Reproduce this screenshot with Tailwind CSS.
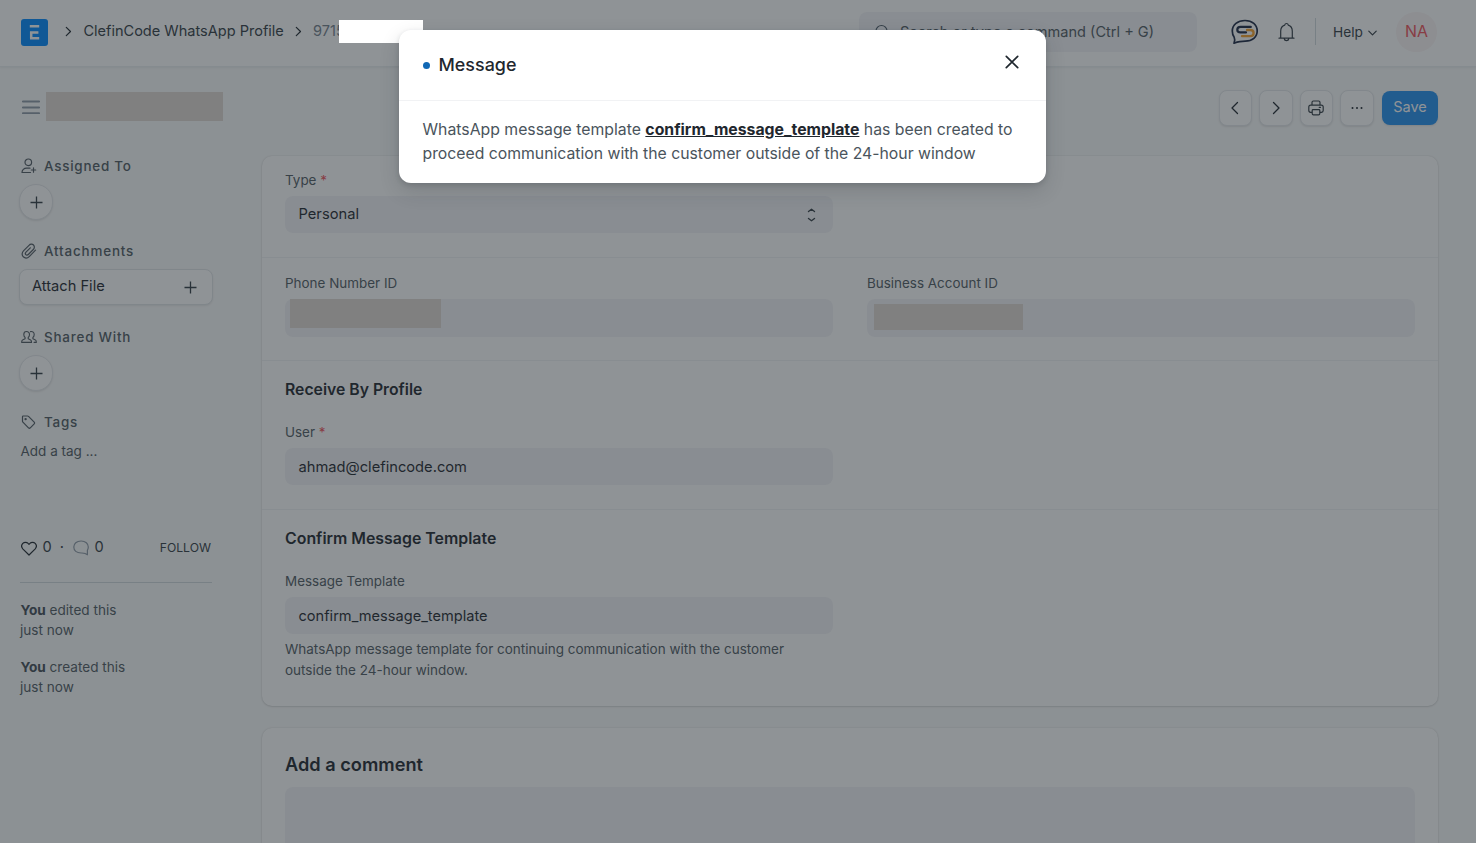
<!DOCTYPE html>
<html lang="en">
<head>
<meta charset="utf-8">
<title>ClefinCode WhatsApp Profile</title>
<script src="https://cdn.jsdelivr.net/npm/@tailwindcss/browser@4"></script>
</head>
<body class="relative h-[843px] w-[1476px] overflow-hidden bg-[#f9fafa] font-['Inter',sans-serif] text-[14.6px] text-[#1f272e]">

<!-- Navbar -->
<header class="flex h-[67px] items-start border-b border-[#ebeef0] bg-white pl-[21px] shadow-[0_1px_2px_rgba(0,0,0,0.06)]">
  <svg class="mt-[19px] h-[27px] w-[27px] shrink-0" viewBox="0 0 27 27"><rect width="27" height="27" rx="3" fill="#0089ff"/><path d="M8.800 7.300h9.400M9 13.500h8.400M10.200 12.300v7.300M9 19.200h9.200" stroke="#fff" stroke-width="2.500" fill="none"/></svg>
  <svg class="ml-[16px] mt-[26px] h-[11px] w-[8px] shrink-0" viewBox="0 0 8 11" fill="none" stroke="#1f272e" stroke-width="1.200" stroke-linecap="round" stroke-linejoin="round"><path d="M2.300 1.300l4.200 4.200-4.200 4.200"/></svg>
  <div class="ml-[11px] mt-[20px] w-[202px] whitespace-nowrap pl-[0.4px] text-[14.55px] leading-[22px] text-[#333c44]">ClefinCode WhatsApp Profile</div>
  <svg class="ml-[10px] mt-[26px] h-[11px] w-[8px] shrink-0" viewBox="0 0 8 11" fill="none" stroke="#1f272e" stroke-width="1.200" stroke-linecap="round" stroke-linejoin="round"><path d="M1.300 1.300l4.200 4.200-4.200 4.200"/></svg>
  <div class="ml-[10px] mt-[20px] w-[109px] text-[14.55px] leading-[22px] text-[#74808b]">9715</div>
  <div class="ml-auto mt-[12px] flex h-[40px] w-[338px] shrink-0 items-center rounded-lg bg-[#f3f3f6] pl-[15px]">
    <svg class="h-[16px] w-[16px]" viewBox="0 0 16 16" fill="none" stroke="#4c5a67" stroke-width="1.200" stroke-linecap="round"><circle cx="7.500" cy="7" r="5.500"/><path d="M11.500 11l3 3"/></svg>
    <span class="ml-[10px] whitespace-nowrap text-[14.57px] leading-[22px] text-[#505a62]">Search or type a command (Ctrl + G)</span>
  </div>
  <svg class="ml-[34px] mt-[19px] h-[26px] w-[28px] shrink-0" viewBox="0 0 28 26" fill="none" stroke-linecap="round" stroke-linejoin="round">
    <path d="M3.200 18.300C1.900 16.500 1.300 14.400 1.300 12 1.300 5.600 6.700 1.500 14 1.500c7.200 0 12.200 4.300 12.200 10.500 0 6-4.900 10.200-11.900 10.200-2 0-3.600.2-5.500.5-2 .3-3.800.8-5.800 1.500.8-2 1.100-4.100.2-5.900z" stroke="#1b2743" stroke-width="1.700"/>
    <path d="M16 11h3.300c2.200 0 3.300 1.300 3.300 3s-1.200 3.200-3.300 3.200H11" stroke="#f6a12b" stroke-width="2.300"/>
    <path d="M19.800 7.900H9.500C7.600 7.900 6.300 9 6.300 10.700s1.200 2.700 3.100 2.700H15" stroke="#1b2743" stroke-width="2.200"/>
  </svg>
  <svg class="ml-[19px] mt-[22px] h-[20px] w-[17px] shrink-0" viewBox="0 0 17 20" fill="none" stroke="#323b44" stroke-width="1.200" stroke-linecap="round" stroke-linejoin="round"><path d="M1 16.200h15M2.700 16V9.200C2.700 6 4.300 3.900 6.700 3.200c.2-1 .9-1.700 1.800-1.700s1.600.7 1.800 1.700c2.400.7 4 2.800 4 6V16M6.200 16.600c.2 1.300 1.100 2 2.300 2s2.100-.7 2.300-2"/></svg>
  <div class="ml-[20px] mt-[18px] h-[27px] w-px bg-[#d1d8dd]"></div>
  <div class="ml-[17px] mt-[21px] w-[35px] text-[13.7px] leading-[22px] text-[#333c44]">Help</div>
  <svg class="mt-[30px] h-[7px] w-[9px] shrink-0" viewBox="0 0 9 7" fill="none" stroke="#333c44" stroke-width="1.200" stroke-linecap="round" stroke-linejoin="round"><path d="M.8 1.200l3.700 3.700 3.700-3.700"/></svg>
  <div class="ml-[19px] mr-[39px] mt-[12px] flex h-[40px] w-[41px] shrink-0 items-center justify-center rounded-full bg-[#fbf4f4] text-[15.9px] text-[#f0525b]">NA</div>
</header>

<!-- Page heading -->
<div class="flex h-[88px] items-start pl-[22px]">
  <svg class="mt-[33px] h-[15px] w-[18px]" viewBox="0 0 18 15" stroke="#8d99a6" stroke-width="1.800" stroke-linecap="round"><path d="M.8 1.500h16.400M.8 7.500h16.400M.8 13.200h16.400"/></svg>
  <div class="ml-[6px] mt-[25px] h-[29px] w-[177px] bg-[#e1d9d2]"></div>
  <div class="ml-auto mr-[38px] mt-[24px] flex">
    <div class="mt-[-1px] flex h-[36px] w-[33px] items-center justify-center rounded-lg border border-[#e4e7ea] bg-white shadow-[0_1px_2px_rgba(0,0,0,0.1)]"><svg class="mr-px h-[14px] w-[10px]" viewBox="0 0 10 14" fill="none" stroke="#1f272e" stroke-width="1.300" stroke-linecap="round" stroke-linejoin="round"><path d="M7.500 1.500L2 7l5.500 5.500"/></svg></div>
    <div class="ml-[7px] mt-[-1px] flex h-[36px] w-[34px] items-center justify-center rounded-lg border border-[#e4e7ea] bg-white shadow-[0_1px_2px_rgba(0,0,0,0.1)]"><svg class="h-[14px] w-[10px]" viewBox="0 0 10 14" fill="none" stroke="#1f272e" stroke-width="1.300" stroke-linecap="round" stroke-linejoin="round"><path d="M2.500 1.500L8 7l-5.500 5.500"/></svg></div>
    <div class="ml-[7px] mt-[-1px] flex h-[36px] w-[33px] items-center justify-center rounded-lg border border-[#e4e7ea] bg-white shadow-[0_1px_2px_rgba(0,0,0,0.1)]"><svg class="mr-px h-[16px] w-[16px]" viewBox="0 0 16 16" fill="none" stroke="#333c44" stroke-width="1.200" stroke-linecap="round" stroke-linejoin="round"><path d="M4 5V2.500c0-.9.600-1.500 1.400-1.500h5.200c.8 0 1.400.6 1.400 1.500V5M3.800 12.300H2.500c-1 0-1.700-.7-1.700-1.700V7c0-1.100.8-1.900 1.900-1.900h10.600c1.100 0 1.900.8 1.900 1.900v3.600c0 1-.7 1.700-1.700 1.700h-1.300M5 9.700h6c.5 0 .8.300.8.8v3c0 .8-.5 1.300-1.200 1.300H5.400c-.7 0-1.200-.5-1.200-1.300v-3c0-.5.300-.8.800-.8zM11.200 7.300h1.300"/></svg></div>
    <div class="ml-[7px] mt-[-1px] flex h-[36px] w-[34px] items-center justify-center rounded-lg border border-[#e4e7ea] bg-white shadow-[0_1px_2px_rgba(0,0,0,0.1)]"><svg class="h-[4px] w-[12px]" viewBox="0 0 12 4" fill="#1f272e"><circle cx="1.500" cy="2" r="1"/><circle cx="6" cy="2" r="1"/><circle cx="10.500" cy="2" r="1"/></svg></div>
    <div class="ml-[8px] h-[34px] w-[56px] rounded-lg bg-[#2490ef] text-center text-[14.5px] leading-[32px] text-white shadow-[0_1px_2px_rgba(0,0,0,0.1)]">Save</div>
  </div>
</div>

<main class="flex h-[688px] overflow-hidden">
  <!-- Sidebar -->
  <aside class="w-[262px] shrink-0 pl-[20px] pr-[50px] text-[13.6px] text-[#505a62]">
    <div class="flex h-[22px] items-center text-[13.45px] font-medium tracking-[0.75px]">
      <svg class="ml-[1px] h-[16px] w-[16px]" viewBox="0 0 16 16" fill="none" stroke="#505a62" stroke-width="1.200" stroke-linecap="round" stroke-linejoin="round"><circle cx="7.300" cy="4.300" r="3.300"/><path d="M9 10.200H5.600C3 10.200 1 12 1 14.500h8.500M12.500 9.800v4.400M10.300 12h4.400"/></svg>
      <span class="ml-[7px]">Assigned To</span>
    </div>
    <div class="-ml-px mt-[7px] flex h-[36px] w-[34px] items-center justify-center rounded-full border border-[#e4e7ea] bg-white shadow-[0_1px_2px_rgba(0,0,0,0.1)]"><svg class="h-[13px] w-[13px]" viewBox="0 0 13 13" stroke="#333c44" stroke-width="1.300"><path d="M6.500.5v12M.5 6.500h12"/></svg></div>
    <div class="mt-[20px] flex h-[22px] items-center text-[13.45px] font-medium tracking-[0.82px]">
      <svg class="ml-[1px] h-[16px] w-[16px]" viewBox="0 0 16 16" fill="none" stroke="#505a62" stroke-width="1.200" stroke-linecap="round" stroke-linejoin="round"><path d="M14.500 7.200l-6 6.100c-1.900 1.900-4.500 2.100-6.200.5-1.700-1.700-1.500-4.300.4-6.200l5.300-5.300c1.300-1.300 3.300-1.500 4.500-.3 1.200 1.200 1.100 3.200-.2 4.500l-5 5c-.8.8-1.800.9-2.500.2-.7-.7-.6-1.700.2-2.500l4.300-4.400"/></svg>
      <span class="ml-[7px]">Attachments</span>
    </div>
    <div class="-ml-px mt-[7px] flex h-[36px] w-[194px] items-center justify-between rounded-lg border border-[#e0e4e7] bg-white pl-[12px] pr-[15px] text-[14.65px] leading-[22px] text-[#1f272e] shadow-[0_1px_2px_rgba(0,0,0,0.08)]"><span class="-mt-[2px]">Attach File</span><svg class="h-[13px] w-[13px]" viewBox="0 0 13 13" stroke="#333c44" stroke-width="1.300"><path d="M6.500.5v12M.5 6.500h12"/></svg></div>
    <div class="mt-[21px] flex h-[22px] items-center text-[13.45px] font-medium tracking-[0.78px]">
      <svg class="ml-[1px] h-[16px] w-[16px]" viewBox="0 0 16 16" fill="none" stroke="#505a62" stroke-width="1.100" stroke-linecap="round" stroke-linejoin="round"><path d="M5.500 2.500C3.700 2.500 2.800 3.700 2.800 5.400c0 1.500.6 2.500 1.300 3.100v1.300L2 10.700c-.9.400-1.300 1-1.300 2.100v.6h9.800v-.6c0-1.100-.4-1.700-1.300-2.100l-2-.9V8.500c.7-.6 1.300-1.600 1.300-3.100 0-1.700-1.200-2.900-3-2.900zM9.500 2.600c2.300-.4 3.700.9 3.700 2.800 0 1.500-.6 2.500-1.300 3.100v1.300l2.100.9c.9.400 1.300 1 1.300 2.100v.6h-2.200"/></svg>
      <span class="ml-[7px]">Shared With</span>
    </div>
    <div class="-ml-px mt-[7px] flex h-[36px] w-[34px] items-center justify-center rounded-full border border-[#e4e7ea] bg-white shadow-[0_1px_2px_rgba(0,0,0,0.1)]"><svg class="h-[13px] w-[13px]" viewBox="0 0 13 13" stroke="#333c44" stroke-width="1.300"><path d="M6.500.5v12M.5 6.500h12"/></svg></div>
    <div class="mt-[20px] flex h-[22px] items-center text-[13.45px] font-medium tracking-[0.75px]">
      <svg class="ml-[1px] h-[16px] w-[16px]" viewBox="0 0 16 16" fill="none" stroke="#505a62" stroke-width="1.200" stroke-linecap="round" stroke-linejoin="round"><path d="M1.500 2.700v4.500c0 .4.100.7.400 1l5.600 5.600c.5.500 1.300.5 1.800 0l3.900-3.900c.5-.5.500-1.300 0-1.800L7.500 2.400c-.3-.3-.6-.4-1-.4H2.200c-.4 0-.7.300-.7.700z"/><circle cx="4.600" cy="5.100" r=".6"/></svg>
      <span class="ml-[7px]">Tags</span>
    </div>
    <div class="mt-[8px] h-[21px] pl-[0.5px] text-[13.5px] leading-[21px]">Add a tag ...</div>

    <div class="mt-[75px] flex h-[22px] items-center text-[14.6px] text-[#333c44]">
      <svg class="ml-[1px] h-[15px] w-[16px]" viewBox="0 0 16 15" fill="none" stroke="#1f272e" stroke-width="1.200" stroke-linejoin="round"><path d="M8 14L2 8.100C.4 6.400.4 3.900 1.800 2.400c1.500-1.500 3.900-1.500 5.300 0L8 3.300l.9-.9c1.400-1.500 3.800-1.500 5.300 0 1.400 1.500 1.400 4-.2 5.700z"/></svg>
      <span class="ml-[5.500px]">0</span><span class="ml-[8px]">·</span>
      <svg class="ml-[9.500px] h-[16px] w-[16px]" viewBox="0 0 16 16" fill="none" stroke="#8d99a6" stroke-width="1.200" stroke-linejoin="round"><path d="M14.400 10.200c.6-1 .9-2 .9-3.200 0-3.500-2.800-6-7.200-6C3.600 1 .8 3.500.8 7s2.800 6 7.300 6c1.600 0 2.900-.1 4 .5l2.300 1.300z"/></svg>
      <span class="ml-[5px]">0</span>
      <span class="ml-auto text-[12.2px] text-[#333c44]"><span class="mr-[1px]">FOLLOW</span></span>
    </div>
    <div class="mt-[23px] w-[192px] border-t border-[#d1d8dd]"></div>
    <div class="mt-[17px] leading-[20px]"><span class="ml-[0.5px]"><b class="font-bold text-[#434d56]">You</b> edited this</span><br>just now</div>
    <div class="mt-[17px] leading-[20px]"><span class="ml-[0.5px]"><b class="font-bold text-[#434d56]">You</b> created this</span><br>just now</div>
  </aside>

  <!-- Form -->
  <div class="w-[1176px] shrink-0 text-[13.45px] text-[#505a62]">
    <div class="mt-px h-[550px] rounded-[10px] bg-white shadow-[0_0_2px_rgba(0,0,0,0.14),0_1px_2px_rgba(0,0,0,0.1)]">
      <section class="h-[102px] border-b border-[#f0f2f4] px-[23px] pt-[14px]">
        <div class="h-[20px] leading-[20px]">Type <span class="text-[#f0525b]">*</span></div>
        <div class="mt-[6px] flex h-[37px] w-[548px] items-center justify-between rounded-lg bg-[#f3f3f6] pl-[13.5px] pr-[17px] text-[14.7px] text-[#1f272e]"><span>Personal</span>
          <svg class="h-[14px] w-[9px]" viewBox="0 0 9 14" fill="none" stroke="#333c44" stroke-width="1.400" stroke-linecap="round" stroke-linejoin="round"><path d="M1.500 3.500l3-2.200 3 2.200M1.500 10.500l3 2.200 3-2.200"/></svg></div>
      </section>
      <section class="flex h-[103px] gap-[34px] border-b border-[#f0f2f4] px-[23px] pt-[15px]">
        <div class="w-[548px]"><div class="h-[20px] leading-[20px]">Phone Number ID</div>
          <div class="mt-[6px] h-[38px] rounded-lg bg-[#f3f3f6] pl-[5px]"><div class="h-[29px] w-[151px] bg-[#e1d9d2]"></div></div></div>
        <div class="w-[548px]"><div class="h-[20px] leading-[20px]">Business Account ID</div>
          <div class="mt-[6px] h-[38px] rounded-lg bg-[#f3f3f6] pl-[7px] pt-[5px]"><div class="h-[26px] w-[149px] bg-[#e1d9d2]"></div></div></div>
      </section>
      <section class="h-[149px] border-b border-[#f0f2f4] px-[23px] pt-[17px]">
        <h2 class="h-[24px] text-[15.78px] font-semibold leading-[24px] text-[#1f272e]">Receive By Profile</h2>
        <div class="mt-[20px] h-[20px] leading-[20px]">User <span class="text-[#f0525b]">*</span></div>
        <div class="mt-[6px] flex h-[37px] w-[548px] items-center rounded-lg bg-[#f3f3f6] pl-[13.5px] pt-[2px] text-[14.7px] text-[#1f272e]">ahmad@clefincode.com</div>
      </section>
      <section class="px-[23px] pt-[17px]">
        <h2 class="h-[24px] text-[15.9px] font-semibold leading-[24px] text-[#1f272e]">Confirm Message Template</h2>
        <div class="mt-[20px] h-[20px] leading-[20px]">Message Template</div>
        <div class="mt-[6px] flex h-[37px] w-[548px] items-center rounded-lg bg-[#f3f3f6] pl-[13.5px] pt-[2px] text-[14.6px] text-[#1f272e]">confirm_message_template</div>
        <p class="mt-[5px] w-[548px] text-[13.5px] leading-[21px]">WhatsApp message template for continuing communication with the customer<br>outside the 24-hour window.</p>
      </section>
    </div>
    <div class="mt-[22px] h-[115px] rounded-t-[10px] bg-white px-[23px] pt-[24px] shadow-[0_0_2px_rgba(0,0,0,0.14),0_1px_2px_rgba(0,0,0,0.1)]">
      <h2 class="h-[24px] text-[18.2px] font-semibold leading-[24px] text-[#1f272e]">Add a comment</h2>
      <div class="mt-[11px] h-[56px] rounded-t-lg bg-[#f3f3f6]"></div>
    </div>
  </div>
</main>

<!-- Backdrop and dialog -->
<div class="absolute inset-0 bg-[#1f272e]/50"></div>
<div class="absolute left-[339px] top-[20px] h-[23px] w-[84px] bg-white"></div>
<div role="dialog" class="absolute left-[399px] top-[30px] h-[153px] w-[647px] rounded-[12px] bg-white shadow-[0_8px_20px_rgba(31,39,46,0.16),0_2px_5px_rgba(31,39,46,0.16)]">
  <div class="flex h-[71px] items-start border-b border-[#f1f2f4] pl-[24px] pr-[27px]">
    <span class="mt-[32px] h-[7px] w-[7px] rounded-full bg-[#1068b5]"></span>
    <span class="ml-[8.500px] mt-[22px] text-[17.92px] font-medium leading-[26px]">Message</span>
    <svg class="ml-auto mt-[25px] h-[14px] w-[14px]" viewBox="0 0 14 14" stroke="#1f272e" stroke-width="1.700" stroke-linecap="round"><path d="M1.300 1.300l11.400 11.400M12.700 1.300L1.300 12.700"/></svg>
  </div>
  <p class="whitespace-nowrap pl-[23.5px] pt-[17px] text-[15.78px] leading-[24px] text-[#4a545c]"><span class="text-[15.81px]">WhatsApp message template <b class="font-bold text-[#1f272e] underline">confirm_message_template</b> has been created to</span><br>proceed communication with the customer outside of the 24-hour window</p>
</div>
</body>
</html>
